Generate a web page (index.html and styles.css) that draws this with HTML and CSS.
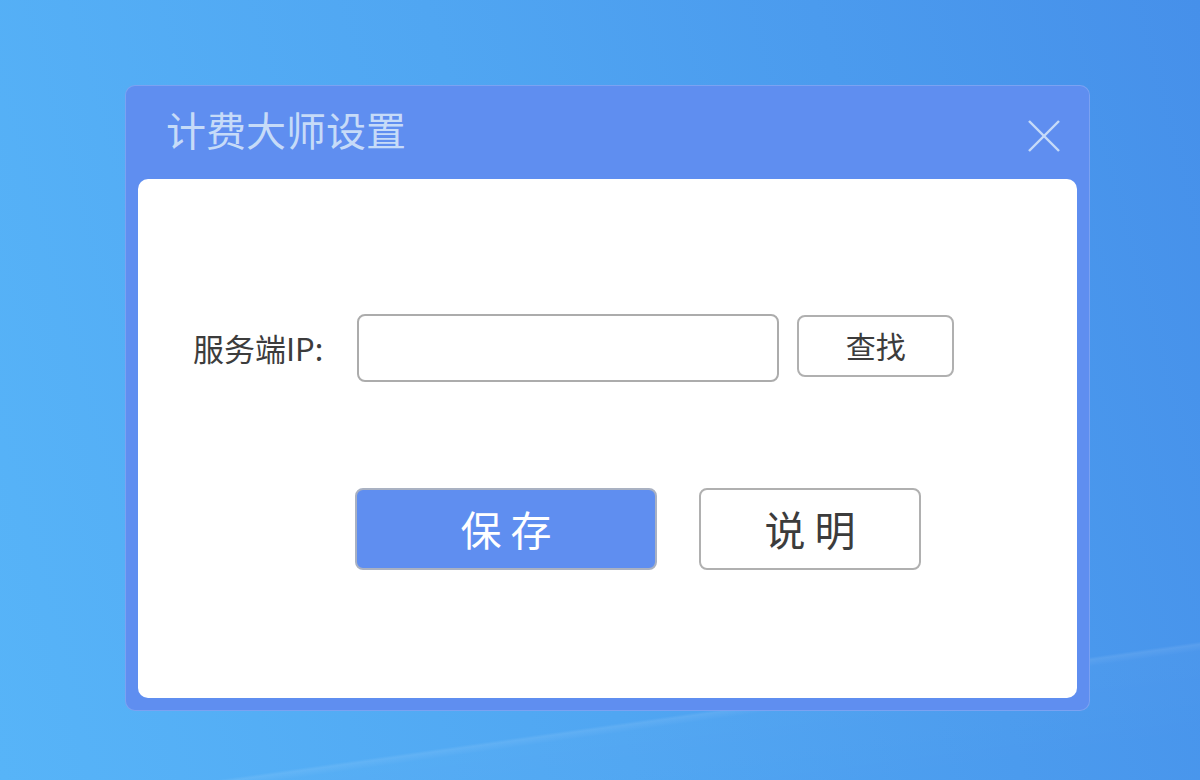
FILE: index.html
```html
<!DOCTYPE html>
<html lang="zh-CN">
<head>
  <meta charset="UTF-8">
  <meta name="viewport" content="width=device-width, initial-scale=1.0">
  <title>计费大师设置</title>
  <link rel="stylesheet" href="styles.css">
</head>
<body>
  <div class="settings-dialog">
    <div class="dialog-header">
      <h2>计费大师设置</h2>
      <button type="button" class="close-btn" title="关闭">
        <svg width="32" height="32" viewBox="0 0 32 32">
          <line x1="1" y1="1" x2="31" y2="31" />
          <line x1="31" y1="1" x2="1" y2="31" />
        </svg>
      </button>
    </div>
    <div class="dialog-body">
      <form id="server-form">
        <div class="server-row">
          <label for="server-ip">服务端IP:</label>
          <input type="text" id="server-ip">
          <button type="button" class="find-btn">查找</button>
        </div>
        <div class="action-row">
          <button type="button" class="save-btn">保 存</button>
          <button type="button" class="help-btn">说 明</button>
        </div>
      </form>
    </div>
  </div>
</body>
</html>
```

FILE: styles.css
```css
html, body {
  margin: 0;
  height: 780px;
}
body {
  font-family: "Noto Sans CJK SC", "Noto Sans", sans-serif;
  box-sizing: border-box;
  padding: 85px 0 0 125px;
  background:
    linear-gradient(172deg, transparent 85.4%, rgba(255, 255, 255, 0.09) 85.7%, rgba(255, 255, 255, 0.02) 86.4%, transparent 96%),
    linear-gradient(75deg, #57b4f8 0%, #50a6f2 45%, #4690ea 100%);
}
.settings-dialog {
  width: 965px;
  height: 626px;
  box-sizing: border-box;
  display: flex;
  flex-direction: column;
  padding: 0 12px 12px;
  background: #5f8ef0;
  border: 1px solid rgba(255, 255, 255, 0.18);
  border-radius: 10px;
}
.dialog-header {
  height: 93px;
  display: flex;
  align-items: center;
  justify-content: space-between;
  padding-left: 28px;
}
.dialog-header h2 {
  margin: 0 0 8px;
  font-size: 40px;
  font-weight: normal;
  color: #c6dbf8;
}
.close-btn {
  background: none;
  border: none;
  padding: 0;
  margin: 6px 17px 0 0;
  cursor: pointer;
  line-height: 0;
}
.close-btn line {
  stroke: #c6dbf8;
  stroke-width: 2.4;
}
.dialog-body {
  flex: 1;
  background: #fff;
  border-radius: 10px;
  padding: 135px 0 0 55px;
}
.server-row {
  display: flex;
  align-items: center;
}
.server-row label {
  font-size: 31px;
  color: #3c3c3c;
  margin: 0 34px 2px 0;
}
.server-row input {
  width: 422px;
  height: 68px;
  box-sizing: border-box;
  border: 2px solid #acacac;
  border-radius: 8px;
  padding: 0 12px;
  font-size: 26px;
}
.find-btn {
  width: 157px;
  height: 62px;
  margin: 0 0 4px 18px;
  padding-bottom: 3px;
  background: #fff;
  border: 2px solid #b0b0b0;
  border-radius: 8px;
  font-family: inherit;
  font-size: 30px;
  color: #3c3c3c;
  cursor: pointer;
}
.action-row {
  display: flex;
  gap: 42px;
  margin: 106px 0 0 162px;
}
.action-row button {
  height: 82px;
  padding-bottom: 4px;
  border-radius: 8px;
  font-family: inherit;
  font-size: 41px;
  cursor: pointer;
}
.save-btn {
  width: 302px;
  background: #5f8ef0;
  border: 2px solid #a9b1c2;
  color: #fff;
}
.help-btn {
  width: 222px;
  background: #fff;
  border: 2px solid #b0b0b0;
  color: #3c3c3c;
}
```
